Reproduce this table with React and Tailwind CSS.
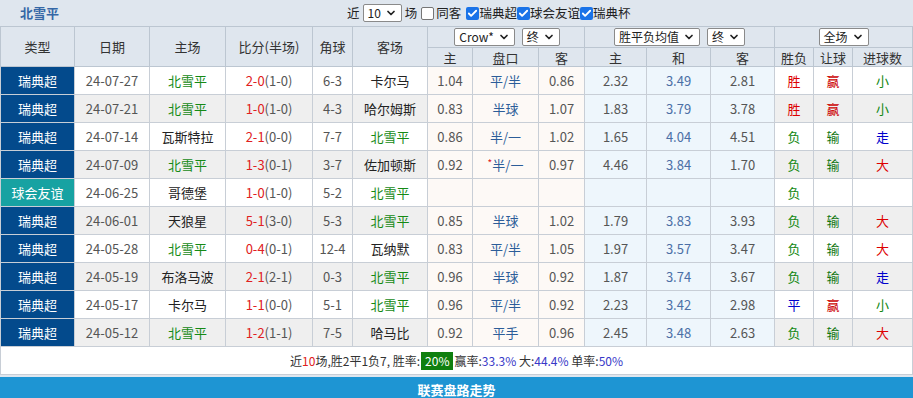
import { Check, ChevronDown } from "lucide-react";

const rows = [
  { type: "瑞典超", date: "24-07-27", home: "北雪平", score: "2-0", half: "(1-0)", corner: "6-3", away: "卡尔马", o1: "1.04", pk: "平/半", o2: "0.86", w: "2.32", d: "3.49", l: "2.81", res: "胜", rq: "赢", dx: "小" },
  { type: "瑞典超", date: "24-07-21", home: "北雪平", score: "1-0", half: "(1-0)", corner: "4-3", away: "哈尔姆斯", o1: "0.83", pk: "半球", o2: "1.07", w: "1.83", d: "3.79", l: "3.78", res: "胜", rq: "赢", dx: "小" },
  { type: "瑞典超", date: "24-07-14", home: "瓦斯特拉", score: "2-1", half: "(0-0)", corner: "7-7", away: "北雪平", o1: "0.86", pk: "半/一", o2: "1.02", w: "1.65", d: "4.04", l: "4.51", res: "负", rq: "输", dx: "走" },
  { type: "瑞典超", date: "24-07-09", home: "北雪平", score: "1-3", half: "(0-1)", corner: "3-7", away: "佐加顿斯", o1: "0.92", pk: "半/一", star: true, o2: "0.97", w: "4.46", d: "3.84", l: "1.70", res: "负", rq: "输", dx: "大" },
  { type: "球会友谊", date: "24-06-25", home: "哥德堡", score: "1-0", half: "(1-0)", corner: "5-2", away: "北雪平", o1: "", pk: "", o2: "", w: "", d: "", l: "", res: "负", rq: "", dx: "" },
  { type: "瑞典超", date: "24-06-01", home: "天狼星", score: "5-1", half: "(3-0)", corner: "5-3", away: "北雪平", o1: "0.85", pk: "半球", o2: "1.02", w: "1.79", d: "3.83", l: "3.93", res: "负", rq: "输", dx: "大" },
  { type: "瑞典超", date: "24-05-28", home: "北雪平", score: "0-4", half: "(0-1)", corner: "12-4", away: "瓦纳默", o1: "0.83", pk: "平/半", o2: "1.05", w: "1.97", d: "3.57", l: "3.47", res: "负", rq: "输", dx: "大" },
  { type: "瑞典超", date: "24-05-19", home: "布洛马波", score: "2-1", half: "(2-1)", corner: "0-3", away: "北雪平", o1: "0.96", pk: "半球", o2: "0.92", w: "1.87", d: "3.74", l: "3.67", res: "负", rq: "输", dx: "走" },
  { type: "瑞典超", date: "24-05-17", home: "卡尔马", score: "1-1", half: "(0-0)", corner: "5-1", away: "北雪平", o1: "0.96", pk: "平/半", o2: "0.92", w: "2.23", d: "3.42", l: "2.98", res: "平", rq: "赢", dx: "小" },
  { type: "瑞典超", date: "24-05-12", home: "北雪平", score: "1-2", half: "(1-1)", corner: "7-5", away: "哈马比", o1: "0.92", pk: "平手", o2: "0.96", w: "2.45", d: "3.48", l: "2.63", res: "负", rq: "输", dx: "大" },
];

const resColor = { 胜: "text-[#dd0000]", 负: "text-[#118811]", 平: "text-[#0000cc]" };
const rqColor = { 赢: "text-[#cc0000]", 输: "text-[#117711]" };
const dxColor = { 小: "text-[#118811]", 大: "text-[#dd0000]", 走: "text-[#0000cc]" };

const widths = [74, 75, 76, 87, 40, 75, 45, 66, 46, 62, 64, 64, 39, 39, 60];

function FakeSelect({ label, className = "" }) {
  return (
    <span className={`inline-flex items-center gap-1 h-[18px] px-1 bg-white border border-[#8a8a8a] rounded-[2px] text-[12px] text-[#222] leading-none ${className}`}>
      {label}
      <ChevronDown className="w-3 h-3" strokeWidth={3.5} />
    </span>
  );
}

function Box({ checked }) {
  return checked ? (
    <span className="inline-flex items-center justify-center w-[13px] h-[13px] rounded-[2px] bg-[#1a73e8]">
      <Check className="w-[11px] h-[11px] text-white" strokeWidth={4} />
    </span>
  ) : (
    <span className="inline-block w-[13px] h-[13px] rounded-[2px] bg-white border border-[#767676]" />
  );
}

const teamCls = (name) => (name === "北雪平" ? "text-[#158a15]" : "text-[#222]");

export default function App() {
  return (
    <div className="w-[913px] h-[398px] overflow-hidden bg-[#dfe6ee] text-[12px] font-['Noto_Sans_CJK_SC','Noto_Sans',sans-serif]">
      {/* top bar */}
      <div className="h-[26px] flex items-center">
        <span className="pl-[20px] w-[347px] text-[13px] font-bold text-[#3567a6]">北雪平</span>
        <div className="flex items-center text-[#222] text-[12.5px]">
          <span>近</span>
          <FakeSelect label="10" className="mx-[3px]" />
          <span className="mr-[4px]">场</span>
          <Box />
          <span className="ml-[2px] mr-[5px]">同客</span>
          <Box checked />
          <span>瑞典超</span>
          <Box checked />
          <span>球会友谊</span>
          <Box checked />
          <span>瑞典杯</span>
        </div>
      </div>

      <table className="table-fixed border-collapse w-[912px] text-center leading-none">
        <colgroup>
          {widths.map((w, i) => (
            <col key={i} style={{ width: w }} />
          ))}
        </colgroup>
        <thead className="text-[#333]">
          <tr className="h-[21px]">
            {["类型", "日期", "主场", "比分(半场)", "角球", "客场"].map((h) => (
              <th key={h} rowSpan={2} className="font-normal border border-[#bcc6d1] text-[13px]">
                {h}
              </th>
            ))}
            <th colSpan={3} className="font-normal border border-[#bcc6d1]">
              <div className="flex justify-center gap-[7px] pl-[2px]">
                <FakeSelect label="Crow*" />
                <FakeSelect label="终" />
              </div>
            </th>
            <th colSpan={3} className="font-normal border border-[#bcc6d1]">
              <div className="flex justify-center gap-[7px]">
                <FakeSelect label="胜平负均值" />
                <FakeSelect label="终" />
              </div>
            </th>
            <th colSpan={3} className="font-normal border border-[#bcc6d1]">
              <div className="flex justify-center">
                <FakeSelect label="全场" />
              </div>
            </th>
          </tr>
          <tr className="h-[19px] text-[13px]">
            {["主", "盘口", "客", "主", "和", "客", "胜负", "让球", "进球数"].map((h, i) => (
              <th key={i} className="font-normal border border-[#bcc6d1]">
                {h}
              </th>
            ))}
          </tr>
        </thead>
        <tbody className="text-[13px]">
          {rows.map((r, i) => {
            const stripe = i % 2 === 0 ? "bg-white" : "bg-[#efefef]";
            const cell = `border border-[#c8ced6] ${stripe}`;
            const o1 = "border border-[#c8ced6] bg-[#fdf9f6] text-[#555]";
            const o2 = "border border-[#c8ced6] bg-[#eef6fc] text-[#555]";
            return (
              <tr key={i} className="h-[28px]">
                <td className={`border border-[#c8ced6] text-white ${r.type === "球会友谊" ? "bg-[#17a2a2]" : "bg-[#034a8c]"}`}>
                  {r.type}
                </td>
                <td className={`${cell} text-[#555]`}>{r.date}</td>
                <td className={`${cell} ${teamCls(r.home)}`}>{r.home}</td>
                <td className={`${cell} text-[#555]`}>
                  <span className="text-[#e02020]">{r.score}</span>
                  {r.half}
                </td>
                <td className={`${cell} text-[#555]`}>{r.corner}</td>
                <td className={`${cell} ${teamCls(r.away)}`}>{r.away}</td>
                <td className={o1}>{r.o1}</td>
                <td className={`${o1} !text-[#2c5d99]`}>
                  {r.star && <span className="text-[#e02020] align-top text-[10px]">*</span>}
                  {r.pk}
                </td>
                <td className={o1}>{r.o2}</td>
                <td className={o2}>{r.w}</td>
                <td className={`${o2} !text-[#4b6fa6]`}>{r.d}</td>
                <td className={o2}>{r.l}</td>
                <td className={`${cell} ${resColor[r.res] || ""}`}>{r.res}</td>
                <td className={`${cell} ${rqColor[r.rq] || ""}`}>{r.rq}</td>
                <td className={`${cell} ${dxColor[r.dx] || ""}`}>{r.dx}</td>
              </tr>
            );
          })}
          <tr className="h-[28px]">
            <td colSpan={15} className="border border-[#c8ced6] bg-white text-[#333] text-[12px]">
              <div className="flex items-center justify-center">
                <span>
                  近<span className="text-[#e02020]">10</span>场,胜2平1负7, 胜率:
                </span>
                <span className="mx-[1px] px-[4px] h-[18px] inline-flex items-center bg-[#0f7f0f] text-white">20%</span>
                <span>
                  {" "}赢率:<span className="text-[#3838c8]">33.3%</span> 大:<span className="text-[#3838c8]">44.4%</span> 单率:<span className="text-[#3838c8]">50%</span>
                </span>
              </div>
            </td>
          </tr>
        </tbody>
      </table>
      <div className="mt-[2px] h-[30px] bg-[#1e95d3] flex justify-center pt-[5px] text-white font-bold text-[13px] leading-[16px]">
        联赛盘路走势
      </div>
    </div>
  );
}
